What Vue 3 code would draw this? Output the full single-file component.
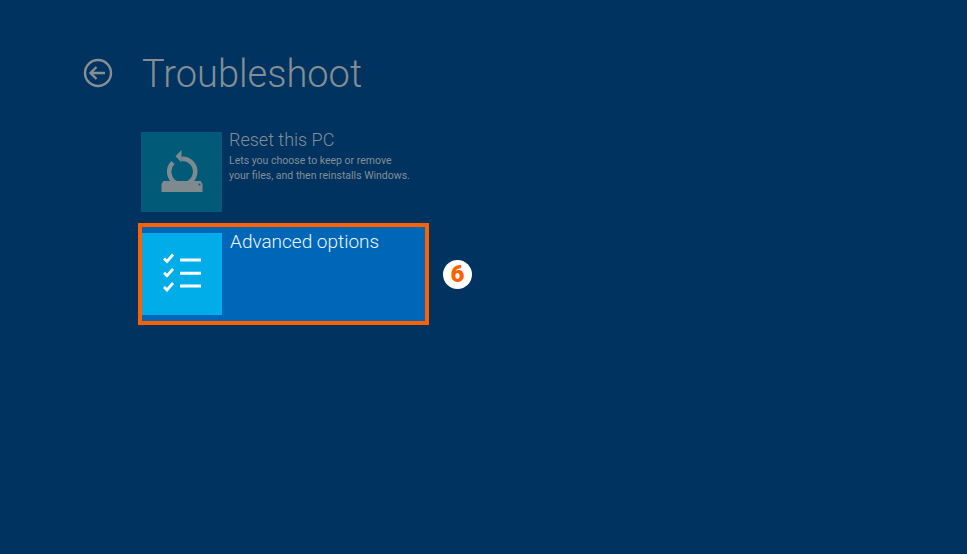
<script setup>
const title = 'Troubleshoot'
</script>

<template>
  <main class="screen">
    <header class="head">
      <svg class="back" width="32" height="32" viewBox="0 0 32 32" fill="none" stroke="#868f94" stroke-width="2.400">
        <circle cx="16" cy="16" r="13" />
        <path d="M23 16H9M14.500 10L8.500 16l6 6" />
      </svg>
      <h1>{{ title }}</h1>
    </header>
    <section class="option dim">
      <div class="tile tile-dim">
        <svg width="44" height="44" viewBox="0 0 44 44" fill="none">
          <path d="M21.500 8.700A13 13 0 1 1 13 12.500" stroke="#7f8a8f" stroke-width="4.600" />
          <path d="M21.500 0V12.500L15.500 6.200z" fill="#7f8a8f" />
          <path d="M3.500 31h37l2 3v8h-41V34z" fill="#7f8a8f" />
          <circle cx="39.500" cy="34.500" r="1" fill="#005a78" />
        </svg>
      </div>
      <div class="copy">
        <h2>Reset this PC</h2>
        <p>Lets you choose to keep or remove<br />your files, and then reinstalls Windows.</p>
      </div>
    </section>
    <div class="row">
      <section class="selected">
        <div class="tile tile-on">
          <svg width="40" height="40" viewBox="0 0 40 40" fill="none" stroke="#fff">
            <path d="M2 6.500l3 3 6-7M2 20.800l3 3 6-7M2 35l3 3 6-7" stroke-width="2.800" />
            <path d="M18 8h21M18 21.300h21M18 34h21" stroke-width="3" />
          </svg>
        </div>
        <h2 class="on">Advanced options</h2>
      </section>
      <span class="badge">6</span>
    </div>
  </main>
</template>

<style scoped>
.screen {
  width: 967px;
  height: 554px;
  box-sizing: border-box;
  padding: 49px 0 0 82px;
  background: #00335f;
  font-family: Roboto, "Open Sans", sans-serif;
  overflow: hidden;
}
.head {
  display: flex;
  align-items: center;
  gap: 28px;
  height: 48px;
}
.back {
  flex: none;
}
h1 {
  margin: 2px 0 0;
  font-size: 38px;
  font-weight: 300;
  line-height: 48px;
  color: #848e95;
}
h2 {
  margin: 0;
  font-size: 18px;
  font-weight: 300;
  line-height: 22px;
  color: #848e95;
}
p {
  margin: 2px 0 0;
  font-size: 10.500px;
  line-height: 15px;
  color: #848e95;
}
.option {
  display: flex;
  gap: 7px;
  margin: 35px 0 0 59px;
}
.tile {
  display: flex;
  align-items: center;
  justify-content: center;
  flex: none;
}
.tile-dim {
  width: 81px;
  height: 80px;
  background: #005a78;
}
.copy {
  margin-top: -3px;
}
.row {
  display: flex;
  align-items: center;
  gap: 14px;
  margin: 11px 0 0 56px;
}
.selected {
  display: flex;
  align-items: flex-start;
  gap: 8px;
  box-sizing: border-box;
  width: 291px;
  height: 102px;
  padding: 6px 0 0;
  border: 4px solid #ff6000;
  background: #0067b8;
}
.tile-on {
  width: 80px;
  height: 82px;
  padding-bottom: 4px;
  box-sizing: border-box;
  background: #00ade8;
}
.on {
  margin-top: -2px;
  color: #eef6fb;
  font-size: 19px;
}
.badge {
  display: flex;
  align-items: center;
  justify-content: center;
  width: 29px;
  height: 29px;
  border-radius: 50%;
  background: #fff;
  color: #ff6000;
  font-size: 24px;
  font-weight: 900;
}
</style>
